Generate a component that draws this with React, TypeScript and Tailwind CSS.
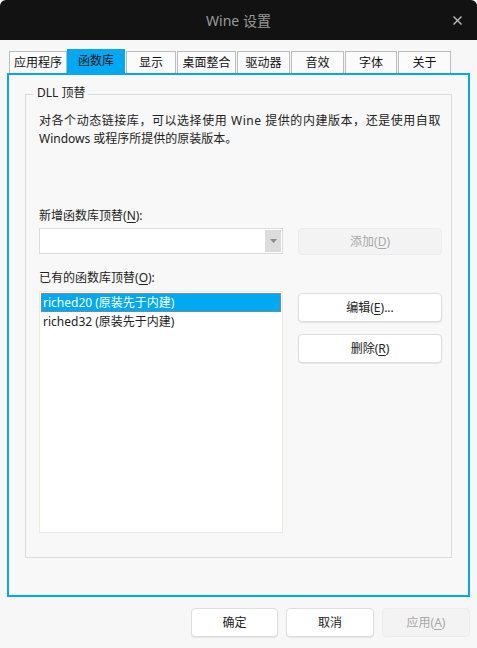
import React from 'react';

// ── Data ───────────────────────────────────────────────────────────────────

const TABS = [
  { label: '应用程序', w: 'w-[58px]' },
  { label: '函数库', w: 'w-[58px]', active: true },
  { label: '显示', w: 'w-[50px]' },
  { label: '桌面整合', w: 'w-[59px]' },
  { label: '驱动器', w: 'w-[53px]' },
  { label: '音效', w: 'w-[53px]' },
  { label: '字体', w: 'w-[52px]' },
  { label: '关于', w: 'w-[53px]' },
];

const OVERRIDES = ['riched20 (原装先于内建)', 'riched32 (原装先于内建)'];

const FONT = 'font-["Noto_Sans","Noto_Sans_CJK_SC",sans-serif]';

// ── Small pieces ───────────────────────────────────────────────────────────

function Mnemonic({ text, k, tail = '' }: { text: string; k: string; tail?: string }) {
  return (
    <>
      {text}(<span className="underline underline-offset-2">{k}</span>){tail}
    </>
  );
}

function Button({
  children,
  disabled,
  className = '',
}: {
  children: React.ReactNode;
  disabled?: boolean;
  className?: string;
}) {
  return (
    <button
      type="button"
      className={`flex items-center justify-center rounded-[4px] border text-[12px] ${
        disabled
          ? 'border-[#ececec] bg-[#f3f3f3] text-[#a8a8a8]'
          : 'border-[#dedede] bg-white text-[#222] shadow-[0_1px_1px_rgba(0,0,0,0.08)]'
      } ${className}`}
    >
      {children}
    </button>
  );
}

// ── App ────────────────────────────────────────────────────────────────────

export default function App() {
  return (
    <div className={`flex h-[648px] w-[477px] flex-col overflow-hidden bg-[#f7f7f7] ${FONT}`}>
      {/* Title bar */}
      <div className="relative flex h-[40px] shrink-0 items-center justify-center rounded-t-[6px] bg-[#121212]">
        <span className="text-[14px] text-[#9a9a9a]">Wine 设置</span>
        <svg
          className="absolute right-[15px] top-[16px]"
          width="9"
          height="9"
          viewBox="0 0 9 9"
          stroke="#bdbdbd"
          strokeWidth="1.4"
        >
          <path d="M0.5 0.5 L8.5 8.5 M8.5 0.5 L0.5 8.5" />
        </svg>
      </div>

      <div className="flex flex-1 flex-col px-[7px] pt-[9px]">
        {/* Tabs */}
        <div className="flex h-[24px] items-end gap-px pl-[2px]">
          {TABS.map((t) =>
            t.active ? (
              <div
                key={t.label}
                className={`${t.w} -ml-px flex h-[24px] items-center justify-center bg-[#00a9f2] text-[12px] text-[#111]`}
              >
                {t.label}
              </div>
            ) : (
              <div
                key={t.label}
                className={`${t.w} flex h-[22px] items-center justify-center border border-b-0 border-[#bcbcbc] bg-[#fbfbfb] text-[12px] text-[#111]`}
              >
                {t.label}
              </div>
            ),
          )}
        </div>

        {/* Page */}
        <div className="h-[524px] border-2 border-[#00a9f2] bg-[#f8f8f8] pl-[16px] pr-[16px] pt-[19px]">
          <div className="relative h-[464px] border border-[#dcdcdc] pl-[13px] pr-[9px] text-[12px] text-[#222]">
            <span className="absolute -top-[11px] left-[8px] bg-[#f8f8f8] px-[3px] leading-[18px]">
              DLL 顶替
            </span>

            <p className="whitespace-nowrap pt-[17px] leading-[18px]">
              <span className="tracking-[0.55px]">
                对各个动态链接库，可以选择使用 Wine 提供的内建版本，还是使用自取
              </span>
              <br />
              Windows 或程序所提供的原装版本。
            </p>

            <div className="mt-[59px] leading-[18px]">
              <Mnemonic text="新增函数库顶替" k="N" tail=":" />
            </div>

            <div className="mt-[3px] flex gap-[15px]">
              <div className="flex h-[26px] w-[244px] items-stretch border border-[#dcdcdc] bg-white p-px">
                <div className="flex-1" />
                <div className="flex w-[16px] items-center justify-center bg-[#dcdcdc]">
                  <svg width="7" height="4" viewBox="0 0 7 4">
                    <path d="M0 0 H7 L3.5 4 Z" fill="#8a8a8a" />
                  </svg>
                </div>
              </div>
              <Button disabled className="h-[27px] w-[144px]">
                <Mnemonic text="添加" k="D" />
              </Button>
            </div>

            <div className="mt-[14px] leading-[18px]">
              <Mnemonic text="已有的函数库顶替" k="O" tail=":" />
            </div>

            <div className="mt-[4px] flex gap-[15px]">
              <div className="h-[242px] w-[244px] border border-[#ecebdf] bg-white p-px">
                {OVERRIDES.map((o, i) => (
                  <div
                    key={o}
                    className={`h-[19px] pl-px leading-[17px] ${
                      i === 0
                        ? 'border border-dotted border-[#e0762a] bg-[#00a9f2] text-white'
                        : 'border border-transparent text-[#222]'
                    }`}
                  >
                    {o}
                  </div>
                ))}
              </div>
              <div className="flex flex-col gap-[12px] pt-[2px]">
                <Button className="h-[29px] w-[144px]">
                  <Mnemonic text="编辑" k="E" tail="..." />
                </Button>
                <Button className="h-[29px] w-[144px]">
                  <Mnemonic text="删除" k="R" />
                </Button>
              </div>
            </div>
          </div>
        </div>

        {/* Dialog buttons */}
        <div className="mt-[11px] flex justify-end gap-[8px]">
          <Button className="h-[29px] w-[87px]">确定</Button>
          <Button className="h-[29px] w-[88px]">取消</Button>
          <Button disabled className="h-[29px] w-[88px]">
            <Mnemonic text="应用" k="A" />
          </Button>
        </div>
      </div>
    </div>
  );
}
